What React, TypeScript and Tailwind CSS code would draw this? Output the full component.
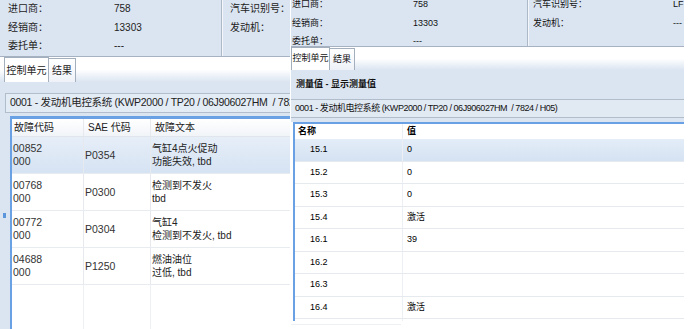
import React from "react";

const font = "font-['Liberation_Sans','Noto_Sans_CJK_SC',sans-serif]";

const faults = [
  { code: "00852", sub: "000", sae: "P0354", text: ["气缸4点火促动", "功能失效, tbd"], selected: true },
  { code: "00768", sub: "000", sae: "P0300", text: ["检测到不发火", "tbd"] },
  { code: "00772", sub: "000", sae: "P0304", text: ["气缸4", "检测到不发火, tbd"] },
  { code: "04688", sub: "000", sae: "P1250", text: ["燃油油位", "过低, tbd"] },
];

const values = [
  ["15.1", "0"],
  ["15.2", "0"],
  ["15.3", "0"],
  ["15.4", "激活"],
  ["16.1", "39"],
  ["16.2", ""],
  ["16.3", ""],
  ["16.4", "激活"],
];

function InfoBox({ labelW, rightLabelW, splitW, shift, right }: { labelW: string; rightLabelW: string; splitW: string; shift: string; right: string[] }) {
  const left = [
    ["进口商：", "758"],
    ["经销商：", "13303"],
    ["委托单：", "---"],
  ];
  return (
    <div className="flex h-full">
      <div className={`${splitW} shrink-0 border-r border-[#aeb9c7] ${shift}`}>
        {left.map(([l, v]) => (
          <div key={l} className="flex whitespace-nowrap">
            <span className={labelW}>{l}</span>
            <span>{v}</span>
          </div>
        ))}
      </div>
      <div className={`flex-1 border-l border-[#f3f6fa] ${shift}`}>
        <div className="flex whitespace-nowrap">
          <span className={rightLabelW}>汽车识别号：</span>
          <span>{right[0]}</span>
        </div>
        <div className="flex whitespace-nowrap">
          <span className={rightLabelW}>发动机：</span>
          <span>{right[1]}</span>
        </div>
      </div>
    </div>
  );
}

function Tabs({ h, first, second, pl }: { h: string; first: string; second: string; pl: string }) {
  return (
    <div className={`${h} shrink-0 flex items-end whitespace-nowrap bg-gradient-to-b from-white via-white to-[#dbe5f1] ${pl}`}>
      <div className={`${first} h-full flex items-center justify-center bg-white border border-b-0 border-[#a3afbd]`}>控制单元</div>
      <div className={`${second} h-[calc(100%-1px)] flex items-center justify-center bg-gradient-to-b from-white to-[#eef2f8] border-r border-t border-[#a3afbd]`}>结果</div>
    </div>
  );
}

function LeftPanel() {
  return (
    <div className="w-[290px] shrink-0 flex flex-col overflow-hidden text-[10px] text-[#222]">
      <div className="h-[57px] shrink-0 bg-[#dbe5f1] border-b border-[#a6b2c1] leading-[18.5px]">
        <InfoBox splitW="w-[222px] pl-[8px]" labelW="w-[106px]" rightLabelW="w-[120px] pl-[7px]" shift="" right={["", ""]} />
      </div>
      <Tabs h="h-[25px]" first="w-[45px]" second="w-[27px]" pl="pl-[4px]" />
      <div className="flex-1 flex flex-col bg-[#dbe5f1] pt-[11px] pl-[5px] relative">
        <div className="h-[20px] w-[330px] shrink-0 border border-[#b1bdcb] bg-[#e3ebf5] pl-[4px] flex items-center whitespace-nowrap text-[10.5px] tracking-[-0.3px]">
          0001 - 发动机电控系统 (KWP2000 / TP20 / 06J906027HM&nbsp;&nbsp;/ 7824 / H05)
        </div>
        <div className="mt-[3px] ml-[5px] w-[320px] flex-1 flex flex-col bg-white border-t-[3px] border-l-2 border-[#6aa0e4]">
          <div className="h-[18px] flex bg-gradient-to-b from-white to-[#f1f4f8] border-b border-[#e1e6ec]">
            <div className="w-[72px] pl-[2px] flex items-center border-r border-[#e6eaef]">故障代码</div>
            <div className="w-[67px] pl-[4px] flex items-center border-r border-[#e6eaef]">SAE 代码</div>
            <div className="flex-1 pl-[4px] flex items-center">故障文本</div>
          </div>
          {faults.map((f) => (
            <div
              key={f.code}
              className={`h-[37px] flex border-b border-[#e8ecf0] leading-[13px] ${f.selected ? "bg-gradient-to-b from-[#e6eef8] to-[#d6e3f3]" : ""}`}
            >
              <div className="w-[72px] pl-[1px] flex flex-col justify-center border-r border-[#e6eaef] text-[#333] text-[10.5px]">
                <span>{f.code}</span>
                <span>{f.sub}</span>
              </div>
              <div className="w-[67px] pl-[1px] flex items-center border-r border-[#e6eaef] text-[#333] text-[10.5px]">{f.sae}</div>
              <div className="flex-1 pl-[1px] flex flex-col justify-center">
                <span>{f.text[0]}</span>
                <span>{f.text[1]}</span>
              </div>
            </div>
          ))}
          <div className="flex-1 flex">
            <div className="w-[72px] border-r border-[#eef1f4]" />
            <div className="w-[67px] border-r border-[#eef1f4]" />
            <div className="flex-1" />
          </div>
        </div>
        <div className="absolute left-[3px] top-[131px] w-[3px] h-[5px] bg-[#5b95dc]" />
      </div>
    </div>
  );
}

function RightPanel() {
  return (
    <div className="w-[393px] ml-[1px] shrink-0 flex flex-col overflow-hidden text-[9px] text-[#111] bg-white">
      <div className="h-[47px] shrink-0 bg-[#dbe5f1] border-b border-[#a6b2c1] leading-[18.5px] overflow-hidden">
        <InfoBox splitW="w-[237px] pl-[1px]" labelW="w-[121px]" rightLabelW="w-[144px] pl-[4px]" shift="-mt-[5px]" right={["LF", "---"]} />
      </div>
      <Tabs h="h-[23px]" first="w-[39px]" second="w-[25px]" pl="pl-[0px]" />
      <div className="h-[29px] shrink-0 bg-[#dbe5f1] pl-[5px] flex items-center font-bold">测量值 - 显示测量值</div>
      <div className="h-[19px] shrink-0 bg-[#e1e9f3] border-y border-[#b1bdcb] pl-[4px] flex items-center whitespace-nowrap tracking-[-0.45px]">
        0001 - 发动机电控系统 (KWP2000 / TP20 / 06J906027HM&nbsp;&nbsp;/ 7824 / H05)
      </div>
      <div className="h-[4px] shrink-0 bg-[#dbe5f1]" />
      <div className="ml-[2px] h-[199px] flex flex-col bg-white border-t-2 border-l-2 border-[#6aa0e4] text-[#000]">
        <div className="h-[15px] shrink-0 flex font-bold">
          <div className="w-[108px] pl-[3px] flex items-center border-r border-[#eceff3]">名称</div>
          <div className="flex-1 pl-[4px] flex items-center">值</div>
        </div>
        {values.map(([n, v], i) => (
          <div
            key={n}
            className={`h-[22.5px] shrink-0 flex border-b border-[#e6eaee] ${i === 0 ? "bg-gradient-to-b from-[#e4edf8] to-[#d5e2f2]" : ""}`}
          >
            <div className="w-[108px] pl-[15px] flex items-center border-r border-[#eceff3]">{n}</div>
            <div className="flex-1 pl-[4px] flex items-center">{v}</div>
          </div>
        ))}
        <div className="flex-1 flex">
          <div className="w-[108px] border-r border-[#eceff3]" />
        </div>
      </div>
      <div className="h-[4px] w-[110px] border-b border-[#eef1f4]" />
    </div>
  );
}

export default function App() {
  return (
    <div className={`w-[692px] h-[329px] bg-white flex overflow-hidden ${font}`}>
      <LeftPanel />
      <RightPanel />
    </div>
  );
}
